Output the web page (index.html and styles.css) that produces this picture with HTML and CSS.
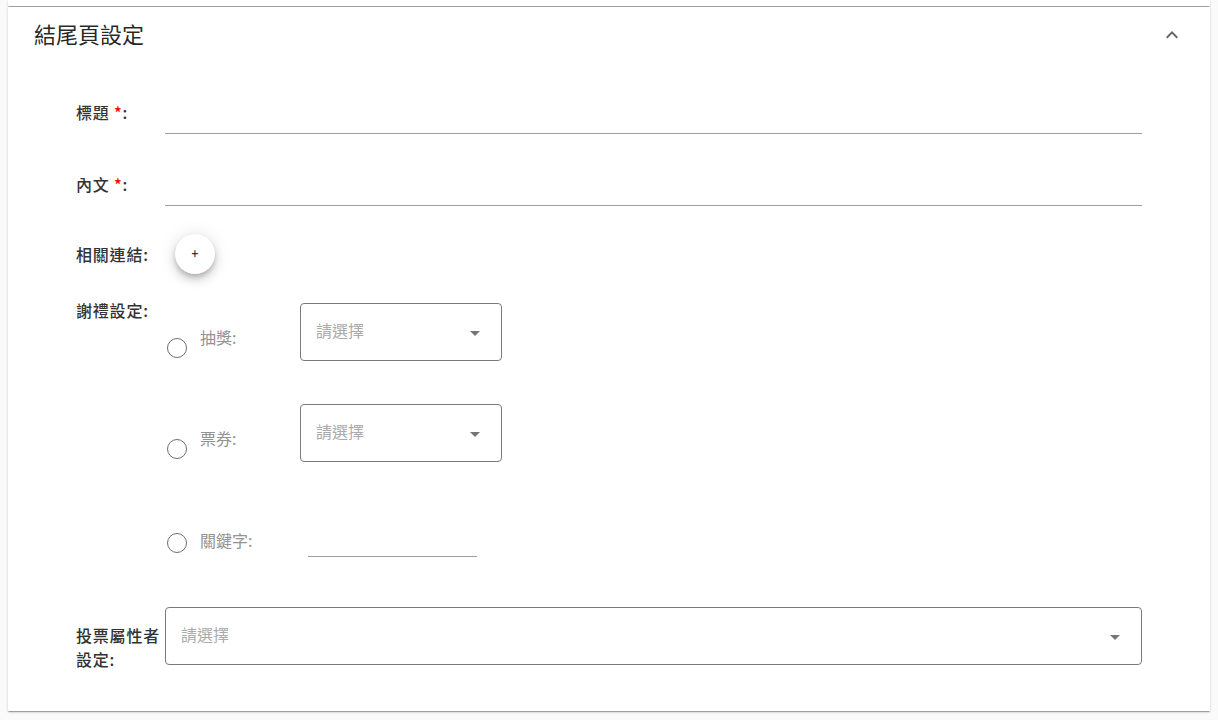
FILE: index.html
```html
<!DOCTYPE html>
<html lang="zh-Hant">
<head>
<meta charset="utf-8">
<title>結尾頁設定</title>
<link rel="stylesheet" href="styles.css">
</head>
<body>
<div class="page">
  <div class="prev-panel"></div>
  <section class="panel">
    <header class="panel-header">
      <h2 class="panel-title">結尾頁設定</h2>
      <svg class="chevron" viewBox="0 0 24 24" width="24" height="24"><path d="M12 8l-6 6 1.41 1.41L12 10.83l4.59 4.58L18 14z"/></svg>
    </header>
    <div class="panel-body">
      <div class="row row-text">
        <label class="label">標題 <span class="req">*</span>:</label>
        <div class="field line-input"></div>
      </div>
      <div class="row row-text">
        <label class="label">內文 <span class="req">*</span>:</label>
        <div class="field line-input"></div>
      </div>
      <div class="row row-links">
        <label class="label">相關連結:</label>
        <div class="field">
          <button class="fab" type="button">+</button>
        </div>
      </div>
      <div class="row row-gift">
        <label class="label">謝禮設定:</label>
        <div class="field options">
          <div class="option">
            <span class="radio"></span>
            <span class="option-label">抽獎:</span>
            <div class="select">
              <span class="placeholder">請選擇</span>
              <svg class="caret" viewBox="0 0 24 24" width="24" height="24"><path d="M7 10l5 5 5-5z"/></svg>
            </div>
          </div>
          <div class="option">
            <span class="radio"></span>
            <span class="option-label">票券:</span>
            <div class="select">
              <span class="placeholder">請選擇</span>
              <svg class="caret" viewBox="0 0 24 24" width="24" height="24"><path d="M7 10l5 5 5-5z"/></svg>
            </div>
          </div>
          <div class="option option-keyword">
            <span class="radio"></span>
            <span class="option-label">關鍵字:</span>
            <div class="keyword-input"></div>
          </div>
        </div>
      </div>
      <div class="row row-attr">
        <label class="label label-wrap">投票屬性者設定:</label>
        <div class="field">
          <div class="select select-wide">
            <span class="placeholder">請選擇</span>
            <svg class="caret" viewBox="0 0 24 24" width="24" height="24"><path d="M7 10l5 5 5-5z"/></svg>
          </div>
        </div>
      </div>
    </div>
  </section>
</div>
</body>
</html>
```

FILE: styles.css
```css
* { box-sizing: border-box; }

html, body {
  margin: 0;
  padding: 0;
  background: #fafafa;
}

body {
  font-family: "Noto Sans CJK TC", "Noto Sans", sans-serif;
  color: rgba(0, 0, 0, 0.87);
  height: 720px;
  overflow: hidden;
}

.page {
  padding: 0 8px;
}

.prev-panel {
  height: 6px;
  background: #fff;
  box-shadow: 0 2px 1px -1px rgba(0,0,0,.2), 0 1px 1px 0 rgba(0,0,0,.14), 0 1px 3px 0 rgba(0,0,0,.12);
}

.panel {
  margin-top: 1px;
  background: #fff;
  box-shadow: 0 2px 1px -1px rgba(0,0,0,.2), 0 1px 1px 0 rgba(0,0,0,.14), 0 1px 3px 0 rgba(0,0,0,.12);
}

.panel-header {
  height: 56px;
  display: flex;
  align-items: center;
  justify-content: space-between;
  padding: 0 26px 4px 26px;
}

.panel-title {
  margin: 0;
  font-size: 22px;
  font-weight: 400;
  line-height: 28px;
  color: rgba(0, 0, 0, 0.87);
}

.chevron {
  fill: #666;
  display: block;
  margin-top: 4px;
}

.panel-body {
  padding: 23px 68px 40px 68px;
}

.row {
  display: flex;
  align-items: flex-start;
}

.label {
  width: 89px;
  flex: none;
  font-size: 16px;
  line-height: 24px;
  font-weight: 500;
  letter-spacing: 0.8px;
  color: #333;
}

.req {
  color: #f00;
}

.field {
  flex: 1;
  min-width: 0;
}

.row-text .label {
  padding-top: 14px;
}

.row-text + .row-text {
  margin-top: 24px;
}

.line-input {
  height: 48px;
  border-bottom: 1px solid #9e9e9e;
}

.row-links {
  margin-top: 28px;
  align-items: center;
}

.fab {
  width: 40px;
  height: 40px;
  margin-left: 10px;
  border: none;
  border-radius: 50%;
  background: #fff;
  color: #333;
  font-family: "Roboto", sans-serif;
  font-size: 12px;
  line-height: 40px;
  padding: 0;
  display: block;
  box-shadow: 0 3px 5px -1px rgba(0,0,0,.2), 0 6px 10px 0 rgba(0,0,0,.14), 0 1px 18px 0 rgba(0,0,0,.12);
}

.row-gift {
  margin-top: 24px;
}

.options {
  padding-top: 5px;
  display: flex;
  flex-direction: column;
  gap: 43px;
}

.option {
  display: flex;
  align-items: flex-start;
  height: 58px;
}

.radio {
  flex: none;
  width: 20px;
  height: 20px;
  margin: 35px 0 0 2px;
  border: 1.6px solid #6e6e6e;
  border-radius: 50%;
}

.option-label {
  flex: none;
  width: 100px;
  margin: 22px 0 0 13px;
  font-size: 16px;
  line-height: 24px;
  color: #939393;
}

.select {
  width: 202px;
  height: 58px;
  border: 1px solid #7a7a7a;
  border-radius: 4px;
  display: flex;
  align-items: flex-start;
  justify-content: space-between;
  padding: 14px 14px 0 15px;
}

.select-wide {
  width: 100%;
}

.placeholder {
  font-size: 16px;
  line-height: 24px;
  color: #ababab;
}

.caret {
  fill: #757575;
  display: block;
  margin-top: 3px;
}

.option-keyword .radio {
  margin-top: 28px;
}

.option-keyword .option-label {
  margin-top: 23px;
}

.keyword-input {
  width: 169px;
  height: 29px;
  margin: 23px 0 0 8px;
  border-bottom: 1px solid #9e9e9e;
}

.row-attr {
  margin-top: 44px;
}

.label-wrap {
  padding-top: 16px;
}
```
